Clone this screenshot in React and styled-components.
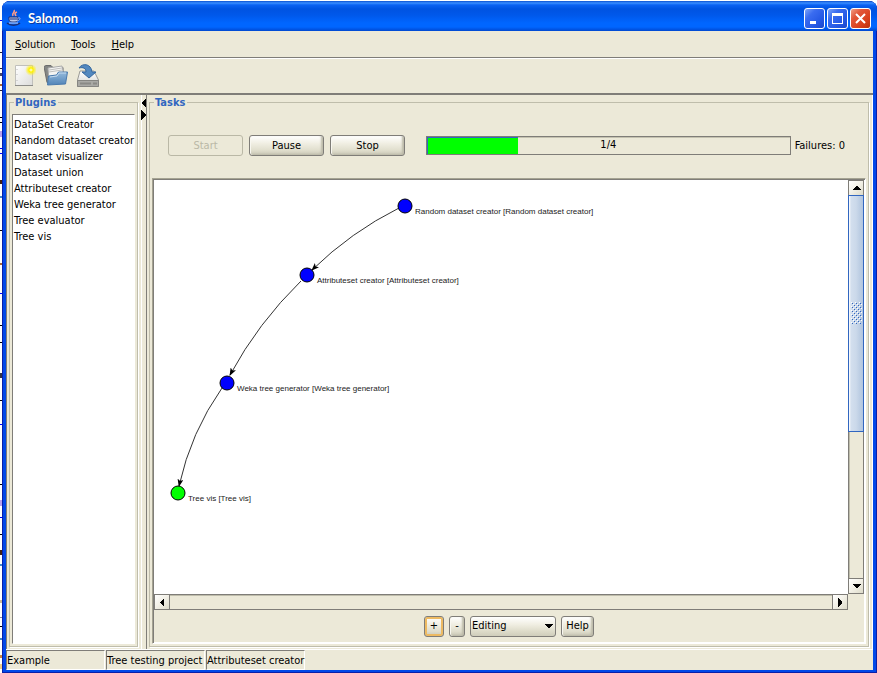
import React from 'react';
import styled, { createGlobalStyle, css } from 'styled-components';

const face = '#ece9d8';
const shade = '#7f7d78';
const etch = '#bfbdab';
const blue = '#3166c0';
const uiFont = '"DejaVu Sans Condensed", "Noto Sans", sans-serif';

const GlobalStyle = createGlobalStyle`
  * { box-sizing: border-box; }
  body { margin: 0; font: 11px/16px ${uiFont}; color: #000; background: #fff; }
  button, select, input { font: inherit; color: inherit; margin: 0; padding: 0; }
`;

/* Fragments of the window behind, visible along the left edge: [top, height, colour] */
const fragments = [
  [20, 1, '#00f'], [52, 1, '#223'], [68, 1, '#223'], [73, 3, '#446'], [84, 2, '#a63'],
  [90, 1, '#223'], [117, 1, '#000'], [122, 1, '#000'], [131, 6, '#b8a0f0'], [148, 1, '#00f'],
  [153, 1, '#00f'], [180, 4, '#421'], [196, 2, '#48c'], [230, 1, '#000'], [263, 2, '#a63'],
  [293, 1, '#00f'], [325, 1, '#000'], [342, 1, '#000'], [373, 5, '#334'], [400, 1, '#000'],
  [424, 1, '#00f'], [484, 1, '#000'], [500, 6, '#b8a0f0'], [517, 1, '#00f'], [534, 1, '#000'],
  [550, 5, '#421'], [564, 2, '#48c'], [600, 3, '#cb9'], [617, 1, '#889'], [626, 1, '#000'],
  [638, 2, '#48c'], [655, 3, '#c84'], [664, 5, '#ec8'],
];

const Desktop = styled.div`
  height: 100vh;
  display: flex;
  padding: 1px 0 0 2px;
  background-color: #fff;
  background-repeat: no-repeat;
  background-image: ${fragments.map(([, , c]) => `linear-gradient(${c}, ${c})`).join(',')};
  background-position: ${fragments.map(([y]) => `0 ${y}px`).join(',')};
  background-size: ${fragments.map(([, h]) => `2px ${h}px`).join(',')};
`;

const Window = styled.div`
  flex: 1;
  min-width: 0;
  display: flex;
  flex-direction: column;
  padding: 0 4px 3px;
  border-radius: 8px 8px 0 0;
  background: #0048e8;
  overflow: hidden;
  box-shadow: inset 0 0 0 1px #0a1fa8;
`;

const TitleBar = styled.header`
  height: 30px;
  flex: none;
  display: flex;
  align-items: center;
  gap: 4px;
  margin: 0 -4px;
  padding: 4px 6px 0 4px;
  background: linear-gradient(#0a4fd0 0, #3a8eff 2px, #0b62f2 4px, #0053e1 8px, #0058ea 14px, #0066ff 22px, #0066ff 26px, #0048d0 30px);
`;

const Title = styled.h1`
  flex: 1;
  margin: 0;
  font: bold 13px/18px Lato, "Noto Sans", sans-serif;
  color: #fff;
  text-shadow: 1px 1px 0 #0a3aa0;
`;

const Controls = styled.div`
  display: flex;
  gap: 2px;
`;

const CaptionButton = styled.button`
  width: 21px;
  height: 21px;
  border: 1px solid #fff;
  border-radius: 3px;
  display: grid;
  place-items: center;
  background: ${(p) =>
    p.$close
      ? 'linear-gradient(135deg, #f0a088 0, #e2583a 30%, #d8401c 70%, #b8300e 100%)'
      : 'linear-gradient(135deg, #7ea6f8 0, #3a6cf0 30%, #2458e4 70%, #1c48c8 100%)'};
`;

const Client = styled.div`
  flex: 1;
  min-height: 0;
  display: flex;
  flex-direction: column;
  background: ${face};
`;

const MenuBar = styled.nav`
  height: 27px;
  flex: none;
  display: flex;
  align-items: center;
  gap: 16px;
  padding: 1px 9px 0;
  border-bottom: 1px solid ${shade};
`;

const MenuButton = styled.button`
  border: 0;
  background: none;
`;

const ToolBar = styled.div`
  height: 37px;
  flex: none;
  display: flex;
  align-items: center;
  gap: 8px;
  padding: 0 6px 2px;
  border-top: 1px solid #fff;
  border-bottom: 2px solid ${shade};
`;

const ToolButton = styled.button`
  width: 24px;
  height: 24px;
  border: 0;
  background: none;
  svg { display: block; }
`;

const Split = styled.main`
  flex: 1;
  min-height: 0;
  display: flex;
  border-bottom: 1px solid #fff;
`;

const Pane = styled.section`
  display: flex;
  min-width: 0;
  padding: 0 2px 2px;
  border-left: 1px solid ${shade};
  ${(p) => (p.$grow ? css`flex: 1; border-right: 1px solid #fff;` : css`flex: 0 0 135px;`)}
`;

const Group = styled.fieldset`
  flex: 1;
  min-width: 0;
  margin: 0 1px 0 0;
  padding: 3px 2px 2px;
  border: 1px solid ${etch};
  box-shadow: 1px 1px 0 #fff;
`;

const Legend = styled.legend`
  margin-left: 2px;
  padding: 0 2px 0 1px;
  font-weight: bold;
  line-height: 15px;
  color: ${blue};
`;

const Fill = styled.div`
  height: 100%;
  display: flex;
  flex-direction: column;
`;

const PluginList = styled.ul`
  flex: 1;
  margin: 1px 0 0;
  padding: 2px 0;
  list-style: none;
  background: #fff;
  border: 1px solid;
  border-color: ${shade} #fff #fff ${shade};
  white-space: nowrap;
`;

const PluginItem = styled.li`
  padding-left: 1px;
  height: 16px;
`;

const Divider = styled.div`
  flex: 0 0 5px;
  display: flex;
  flex-direction: column;
  gap: 2px;
  padding-top: 3px;
  box-shadow: inset 1px 0 0 #fff;
`;

const DividerButton = styled.button`
  width: 5px;
  height: 10px;
  border: 0;
  background: none;
  svg { display: block; }
`;

const RunRow = styled.div`
  height: 65px;
  flex: none;
  display: flex;
  align-items: center;
  gap: 6px;
  padding: 0 21px 0 16px;
`;

const PushButton = styled.button`
  width: ${(p) => p.$width}px;
  height: 21px;
  flex: none;
  border: 1px solid ${shade};
  border-radius: 3px;
  background: linear-gradient(#fff 0, #f0eee2 40%, #e0decd 75%, #c9c7b6 100%);
  box-shadow: inset 1px 0 0 #f8f7f0, inset -2px -1px 2px #bdbbaa;
  &:disabled {
    color: #bab8a6;
    border-color: #bab8a6;
    background: none;
    box-shadow: none;
  }
  ${(p) => p.$focused && css`box-shadow: inset 0 0 0 2px #edba62;`}
`;

const Progress = styled.div`
  flex: 1;
  height: 19px;
  margin-left: 15px;
  display: grid;
  border: 1px solid ${shade};
  box-shadow: inset 0 1px 0 #c4c2b0;
  > * { grid-area: 1 / 1; }
`;

const ProgressFill = styled.div`
  background: #0f0;
  box-shadow: inset 1px 1px 0 ${blue};
`;

const ProgressText = styled.span`
  text-align: center;
`;

const Failures = styled.span`
  margin-left: -2px;
`;

const Sunken = styled.div`
  flex: 1;
  min-height: 0;
  display: flex;
  flex-direction: column;
  border: 1px solid;
  border-color: #a5a392 #fff #fff #a5a392;
  box-shadow: inset 1px 1px 0 ${shade}, inset -1px -1px 0 #fff;
  padding: 1px;
`;

const Viewport = styled.div`
  flex: 1;
  min-height: 0;
  display: grid;
  grid-template-columns: minmax(0, 1fr) 16px;
  grid-template-rows: minmax(0, 1fr) 16px;
`;

const Graph = styled.svg`
  display: block;
  width: 100%;
  height: 100%;
  background: #fff;
  text {
    font: 8px "Liberation Sans", Arial, sans-serif;
    fill: #222;
  }
`;

const ScrollBar = styled.div`
  display: flex;
  flex-direction: ${(p) => (p.$vertical ? 'column' : 'row')};
  border: 1px solid ${shade};
  box-shadow: inset 1px 1px 0 ${etch};
`;

const ScrollButton = styled.button`
  flex: 0 0 15px;
  display: grid;
  place-items: center;
  border: 0 solid ${shade};
  border-width: ${(p) => p.$edge};
  background: linear-gradient(135deg, #fff, #f2f0e6 50%, #dddbc9);
`;

const Track = styled.div`
  flex: 1;
  min-height: 0;
`;

const Thumb = styled.div`
  height: 62%;
  margin: -1px -1px 0;
  display: grid;
  place-items: center;
  border: 1px solid ${blue};
  background: linear-gradient(90deg, #fff 0, #d3dfee 2px, #cbd9ea 50%, #b0c4de 100%);
`;

const ModeRow = styled.div`
  height: 32px;
  flex: none;
  display: flex;
  align-items: center;
  justify-content: center;
  gap: 5px;
`;

const Combo = styled.label`
  display: grid;
  align-items: center;
  width: 86px;
  > * { grid-area: 1 / 1; }
  > svg { justify-self: end; margin-right: 3px; pointer-events: none; z-index: 1; }
`;

const ComboSelect = styled.select`
  appearance: none;
  width: 100%;
  height: 21px;
  padding-left: 1px;
  border: 1px solid ${shade};
  border-radius: 3px;
  background: linear-gradient(#fff 0, #f0eee2 40%, #dddbc9 75%, #cfcdbb 100%);
`;

const StatusBar = styled.footer`
  height: 20px;
  flex: none;
  display: flex;
  gap: 1px;
`;

const StatusCell = styled.span`
  flex: 0 0 99px;
  white-space: nowrap;
  line-height: 19px;
  border: 1px solid;
  border-color: ${shade} #fff #fff ${shade};
`;

const JavaIcon = () => (
  <svg width="18" height="18" viewBox="0 0 18 18" fill="none">
    <path d="M8 1c2 2-3 3-1 6M11 3c-3 1-2 2-1 4" stroke="#ff9c84" strokeWidth="1.600" />
    <path d="M3 8h9v2c0 3-2 3-4.500 3S3 13 3 10z" fill="#b8c8ec" stroke="#1c2f74" />
    <path d="M4 10h7" stroke="#1c2f74" />
    <path d="M12 9c3-1 3 2-1 3" stroke="#9cb4ec" />
    <path d="M1 14c3 3 10 3 13 0" stroke="#1c2f74" strokeWidth="1.500" />
    <path d="M3 14h9" stroke="#c4d4f8" />
  </svg>
);

const NewIcon = () => (
  <svg width="24" height="24" viewBox="0 0 24 24">
    <defs>
      <linearGradient id="paper" x2="1" y2="1"><stop stopColor="#fff" /><stop offset="1" stopColor="#dcdcda" /></linearGradient>
      <radialGradient id="glow"><stop stopColor="#fffef0" /><stop offset=".35" stopColor="#fff200" /><stop offset="1" stopColor="#ffee30" stopOpacity="0" /></radialGradient>
    </defs>
    <path d="M3.500 2.500h17v20h-17z" fill="url(#paper)" stroke="#c0c0bc" />
    <path d="M3 22.500h18" stroke="#8c8c88" />
    <path d="M5 6v1M5 11v1M5 17v1" stroke="#bbb" />
    <circle cx="19" cy="7" r="6" fill="url(#glow)" />
  </svg>
);

const OpenIcon = () => (
  <svg width="24" height="24" viewBox="1 0 24 24">
    <defs>
      <linearGradient id="folder" x2="0" y2="1"><stop stopColor="#94badc" /><stop offset="1" stopColor="#5184b8" /></linearGradient>
    </defs>
    <path d="M1 3.500l2-1h5l2 2h10v15H4z" fill="#858785" stroke="#6c6c6c" />
    <path d="M5 5l14-2 2 10-15 5z" fill="#f4f4f2" stroke="#aaa" />
    <path d="M6 7l13-2M6 9l13-2" stroke="#c0c0be" />
    <path d="M5.500 13l8-1 2-3h9l-2 12-18 1z" fill="url(#folder)" stroke="#4a7aad" />
    <path d="M7 14l7-1 2-3h7" stroke="#c4daee" fill="none" />
  </svg>
);

const SaveIcon = () => (
  <svg width="24" height="24" viewBox="1 0 24 24">
    <defs>
      <linearGradient id="drive" x2="0" y2="1"><stop stopColor="#fff" /><stop offset="1" stopColor="#d4d4d0" /></linearGradient>
    </defs>
    <path d="M5 8h14l4.500 9v6.500h-21V17z" fill="url(#drive)" stroke="#9a9a96" />
    <path d="M2.500 17.500h21v6h-21z" fill="#a9a9a5" stroke="#868682" />
    <path d="M5 20.500h11M18 20.500h4" stroke="#8a8a86" strokeWidth="2" />
    <path d="M4 5c3-5 12-5 13 4h4l-7 6-7-6h4c0-4-3-5-7-4z" fill="#5388bf" stroke="#34679f" />
  </svg>
);

const Arrow = ({ dir }) => {
  const shapes = {
    up: 'M0 5h9L5 1H4z',
    down: 'M0 1h9L5 5H4z',
    left: 'M5 0v9L1 5V4z',
    right: 'M1 0v9l4-4V4z',
  };
  const tall = dir === 'left' || dir === 'right';
  return (
    <svg width={tall ? 6 : 9} height={tall ? 9 : 6} shapeRendering="crispEdges">
      <path d={shapes[dir]} />
    </svg>
  );
};

const Grip = () => (
  <svg width="11" height="22" shapeRendering="crispEdges">
    <defs>
      <pattern id="dots" width="4" height="4" patternUnits="userSpaceOnUse">
        <path d="M0 0h1v1H0zM2 2h1v1H2z" fill="#fff" />
        <path d="M1 1h1v1H1zM3 3h1v1H3z" fill={blue} />
      </pattern>
    </defs>
    <rect width="11" height="22" fill="url(#dots)" />
  </svg>
);

const plugins = [
  'DataSet Creator', 'Random dataset creator', 'Dataset visualizer', 'Dataset union',
  'Attributeset creator', 'Weka tree generator', 'Tree evaluator', 'Tree vis',
];

const nodes = [
  { x: 251, y: 26, name: 'Random dataset creator', color: '#00f' },
  { x: 153, y: 95, name: 'Attributeset creator', color: '#00f' },
  { x: 73, y: 203, name: 'Weka tree generator', color: '#00f' },
  { x: 24, y: 313, name: 'Tree vis', color: '#0f0' },
];

const edges = ['M245 28Q197 52 158 90', 'M147 101Q104 143 76 195', 'M68 208Q37 252 25 306'];

const menus = ['Solution', 'Tools', 'Help'];

const progress = { done: 1, total: 4 };

export default function App() {
  return (
    <>
      <GlobalStyle />
      <Desktop>
        <Window>
          <TitleBar>
            <JavaIcon />
            <Title>Salomon</Title>
            <Controls>
              <CaptionButton aria-label="Minimize">
                <svg width="13" height="13"><path d="M2 9h6v3H2z" fill="#fff" /></svg>
              </CaptionButton>
              <CaptionButton aria-label="Maximize">
                <svg width="13" height="13"><path d="M1 1h11v11H1zM2 4v7h9V4z" fill="#fff" fillRule="evenodd" /></svg>
              </CaptionButton>
              <CaptionButton $close aria-label="Close">
                <svg width="13" height="13"><path d="M2 2l9 9M11 2l-9 9" stroke="#fff" strokeWidth="2" /></svg>
              </CaptionButton>
            </Controls>
          </TitleBar>
          <Client>
            <MenuBar>
              {menus.map((m) => (
                <MenuButton key={m}><u>{m[0]}</u>{m.slice(1)}</MenuButton>
              ))}
            </MenuBar>
            <ToolBar>
              <ToolButton aria-label="New"><NewIcon /></ToolButton>
              <ToolButton aria-label="Open"><OpenIcon /></ToolButton>
              <ToolButton aria-label="Save"><SaveIcon /></ToolButton>
            </ToolBar>
            <Split>
              <Pane>
                <Group>
                  <Legend>Plugins</Legend>
                  <Fill>
                    <PluginList>
                      {plugins.map((p) => <PluginItem key={p}>{p}</PluginItem>)}
                    </PluginList>
                  </Fill>
                </Group>
              </Pane>
              <Divider>
                <DividerButton aria-label="Collapse left">
                  <svg width="5" height="10" shapeRendering="crispEdges"><path d="M5 0v10L0 5z" /></svg>
                </DividerButton>
                <DividerButton aria-label="Collapse right">
                  <svg width="5" height="10" shapeRendering="crispEdges"><path d="M0 0v10l5-5z" /></svg>
                </DividerButton>
              </Divider>
              <Pane $grow>
                <Group>
                  <Legend>Tasks</Legend>
                  <Fill>
                    <RunRow>
                      <PushButton $width={75} disabled>Start</PushButton>
                      <PushButton $width={75}>Pause</PushButton>
                      <PushButton $width={75}>Stop</PushButton>
                      <Progress role="progressbar" aria-label="Task progress" aria-valuenow={progress.done} aria-valuemax={progress.total}>
                        <ProgressFill style={{ width: `${(progress.done / progress.total) * 100}%` }} />
                        <ProgressText>{`${progress.done}/${progress.total}`}</ProgressText>
                      </Progress>
                      <Failures>Failures: 0</Failures>
                    </RunRow>
                    <Sunken>
                      <Viewport>
                        <Graph role="img" aria-label="Task graph">
                          <defs>
                            <marker id="head" viewBox="0 0 8 6" refX="7" refY="3" markerWidth="8" markerHeight="6" orient="auto">
                              <path d="M0 0l8 3-8 3 2-3z" />
                            </marker>
                          </defs>
                          {edges.map((d) => (
                            <path key={d} d={d} fill="none" stroke="#333" markerEnd="url(#head)" />
                          ))}
                          {nodes.map((n) => (
                            <g key={n.name}>
                              <circle cx={n.x} cy={n.y} r="7" fill={n.color} stroke="#000" />
                              <text x={n.x + 10} y={n.y + 8}>{`${n.name} [${n.name}]`}</text>
                            </g>
                          ))}
                        </Graph>
                        <ScrollBar $vertical>
                          <ScrollButton $edge="0 0 1px" aria-label="Scroll up"><Arrow dir="up" /></ScrollButton>
                          <Track><Thumb><Grip /></Thumb></Track>
                          <ScrollButton $edge="1px 0 0" aria-label="Scroll down"><Arrow dir="down" /></ScrollButton>
                        </ScrollBar>
                        <ScrollBar>
                          <ScrollButton $edge="0 1px 0 0" aria-label="Scroll left"><Arrow dir="left" /></ScrollButton>
                          <Track />
                          <ScrollButton $edge="0 0 0 1px" aria-label="Scroll right"><Arrow dir="right" /></ScrollButton>
                        </ScrollBar>
                      </Viewport>
                      <ModeRow>
                        <PushButton $width={20} $focused>+</PushButton>
                        <PushButton $width={16}>-</PushButton>
                        <Combo>
                          <ComboSelect aria-label="Mode" defaultValue="Editing"><option>Editing</option></ComboSelect>
                          <Arrow dir="down" />
                        </Combo>
                        <PushButton $width={33}>Help</PushButton>
                      </ModeRow>
                    </Sunken>
                  </Fill>
                </Group>
              </Pane>
            </Split>
            <StatusBar>
              <StatusCell>Example</StatusCell>
              <StatusCell>Tree testing project</StatusCell>
              <StatusCell>Attributeset creator</StatusCell>
            </StatusBar>
          </Client>
        </Window>
      </Desktop>
    </>
  );
}
